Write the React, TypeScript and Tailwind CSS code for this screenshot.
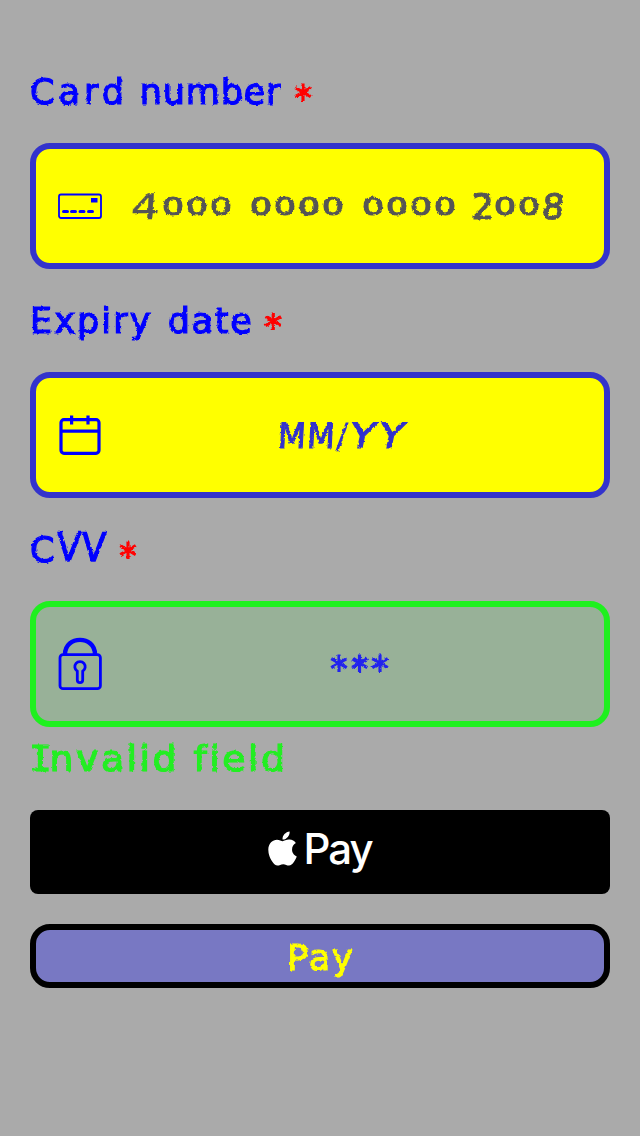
import type { ReactNode } from "react";
import { FaApple } from "react-icons/fa";

const chalk = "font-['DejaVu_Sans',sans-serif] text-[35px] leading-none whitespace-pre [-webkit-text-stroke:1.2px_currentColor] [filter:url(#chalk)]";

function ChalkFilter() {
  return (
    <svg className="absolute size-0" aria-hidden="true">
      <filter id="chalk" x="-5%" y="-20%" width="110%" height="140%">
        <feTurbulence type="fractalNoise" baseFrequency="0.28" numOctaves="2" seed="4" result="grain" />
        <feDisplacementMap in="SourceGraphic" in2="grain" scale="3" xChannelSelector="R" yChannelSelector="G" />
      </filter>
    </svg>
  );
}

function Label({ children, gap }: { children: ReactNode; gap: string }) {
  return (
    <div className={`flex h-[103px] items-center pt-[2px] text-[#0000ff] ${chalk}`}>
      <span>{children}</span>
      <span className={`translate-y-[6px] text-[#ff0000] ${gap}`}>*</span>
    </div>
  );
}

function Field({ children, icon, tone }: { children: ReactNode; icon: ReactNode; tone: string }) {
  return (
    <div className={`flex h-[126px] items-center rounded-[20px] border-[6px] pl-[20px] ${tone}`}>
      {icon}
      <div className={`flex flex-1 items-center justify-center ${chalk}`}>{children}</div>
    </div>
  );
}

function CardIcon() {
  return (
    <svg className="h-[56px] w-[48px] shrink-0" viewBox="0 0 48 56" fill="none" stroke="#0000ff">
      <rect x="3" y="16.5" width="42" height="23.5" rx="2" strokeWidth="1.8" />
      <rect x="35" y="20" width="6.5" height="4.5" fill="#0000ff" stroke="none" />
      <path d="M7.5 33.5h4M15.5 33.5h4M24 33.5h4M32.5 33.5h4" strokeWidth="3" strokeLinecap="round" />
    </svg>
  );
}

function CalendarIcon() {
  return (
    <svg className="h-[56px] w-[48px] shrink-0" viewBox="0 0 48 56" fill="none" stroke="#0000ff" strokeWidth="3.2">
      <rect x="5" y="12.7" width="38" height="33.6" rx="3" />
      <path d="M5 24.2h38M15.6 8.5v9M32 8.5v9" />
    </svg>
  );
}

function LockIcon() {
  return (
    <svg className="h-[60px] w-[48px] shrink-0" viewBox="0 0 48 60" fill="none" stroke="#0000ff">
      <rect x="4" y="20.7" width="40.4" height="34" rx="3" strokeWidth="2.8" />
      <path d="M9 20.5C9 1 39 1 39 20.5" strokeWidth="4.4" />
      <path d="M21.3 37.2a5.2 5.2 0 1 1 5.4 0V46a2.7 2.7 0 0 1-5.4 0Z" strokeWidth="2.8" />
    </svg>
  );
}

function Zeros({ children, width }: { children: string; width: string }) {
  return (
    <span className={`inline-block ${width} -translate-y-[4px]`}>
      <span className="inline-block origin-left scale-x-[1.38] text-[25px] tracking-[1.5px]">{children}</span>
    </span>
  );
}

export default function App() {
  return (
    <main className="h-[1136px] w-[640px] bg-[#aaaaaa] px-[30px] pt-[40px]">
      <ChalkFilter />
      <Label gap="ml-[13px]">
        <span className="tracking-[4px]">Card</span>
        <span className="tracking-[0.8px]"> number</span>
      </Label>
      <Field tone="border-[#3333cc] bg-[#ffff00]" icon={<CardIcon />}>
        <span className="-translate-x-[6px] translate-y-px text-[#555555]">
          <span className="inline-block w-[31px]"><span className="inline-block origin-left -skew-x-3 scale-x-[1.3] [-webkit-text-stroke:0.4px]">4</span></span>
          <Zeros width="w-[72px]">000</Zeros>
          <span className="inline-block w-[16px]"> </span>
          <Zeros width="w-[96px]">0000</Zeros>
          <span className="inline-block w-[16px]"> </span>
          <Zeros width="w-[96px]">0000</Zeros>
          <span className="inline-block w-[16px]"> </span>
          <span className="inline-block w-[20px] -translate-x-[2px]">2</span>
          <Zeros width="w-[48px]">00</Zeros>
          <span className="inline-block w-[24px] -skew-x-6">8</span>
        </span>
      </Field>
      <Label gap="ml-[11px]">
        <span className="tracking-[2.1px] [word-spacing:2px]">Expiry </span>
        <span className="tracking-[1.7px]">date</span>
      </Label>
      <Field tone="border-[#3333cc] bg-[#ffff00]" icon={<CalendarIcon />}>
        <span className="flex -translate-x-[11px] translate-y-px text-[#3333cc]">
          <span className="inline-block w-[58px] -skew-x-3">
            <span className="inline-block origin-left scale-x-[0.92] tracking-[1.5px]">MM</span>
          </span>
          <span className="inline-block w-[14px] -skew-x-3 [-webkit-text-stroke:0px]">/</span>
          <span className="inline-block w-[58px] -skew-x-12">
            <span className="inline-block origin-left scale-x-[1.16] tracking-[3.6px]">YY</span>
          </span>
        </span>
      </Field>
      <Label gap="ml-[13px]">
        <span className="tracking-[2px]">C</span>
        <span className="inline-block origin-bottom scale-y-[1.12] -skew-x-3 tracking-[1px]">VV</span>
      </Label>
      <Field tone="border-[#1ff01f] bg-[#98b198]" icon={<LockIcon />}>
        <span className="translate-x-[7px] translate-y-[5px] tracking-[3px] text-[#2222ee]">***</span>
      </Field>
      <div className={`flex h-[63px] items-center pt-[1px] text-[#22ee22] ${chalk}`}>
        <span className="origin-left -translate-x-px scale-x-[1.08] tracking-[2.3px]">
          <span className="font-['DejaVu_Sans_Mono',monospace] tracking-[-2px]">I</span>nvalid field
        </span>
      </div>
      <button className="mt-[20px] flex h-[84px] w-full items-center justify-center rounded-[8px] bg-black text-white">
        <FaApple className="-mt-[8px] mr-[6px] h-[39px] w-[29px]" preserveAspectRatio="none" />
        <span className="-translate-y-[3px] font-['Inter',sans-serif] text-[42px] leading-none font-medium tracking-[-2px]">Pay</span>
      </button>
      <button className="mt-[30px] flex h-[64px] w-full items-center justify-center rounded-[20px] border-[6px] border-black bg-[#7878c3]">
        <span className={`translate-x-px pt-[4px] tracking-[2px] text-[#ffff00] ${chalk}`}>Pay</span>
      </button>
    </main>
  );
}
